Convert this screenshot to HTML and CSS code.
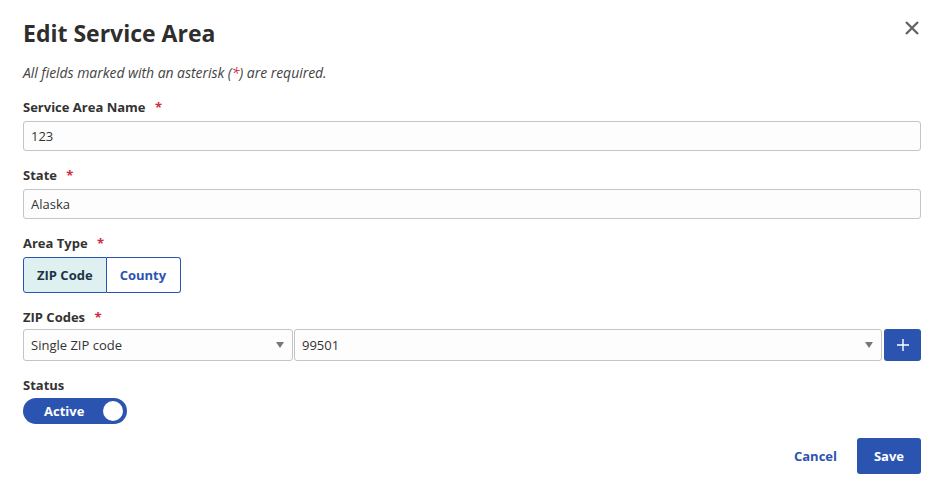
FILE: index.html
```html
<!DOCTYPE html>
<html lang="en">
<head>
    <meta charset="UTF-8">
    <title>Edit Service Area</title>
    <link rel="stylesheet" href="styles.css">
</head>
<body>
    <div class="modal">
        <div class="modal-header">
            <h1>Edit Service Area</h1>
            <button class="close-btn" aria-label="Close">
                <svg width="16" height="16" viewBox="0 0 16 16">
                    <path d="M2 2 L14 14 M14 2 L2 14" stroke="#666" stroke-width="2.4" stroke-linecap="butt"/>
                </svg>
            </button>
        </div>

        <p class="note">All fields marked with an asterisk (<span class="req">*</span>) are required.</p>

        <!-- Service area name -->
        <div class="field">
            <label>Service Area Name <span class="req">*</span></label>
            <input type="text" class="text-input" value="123">
        </div>

        <!-- State -->
        <div class="field">
            <label>State <span class="req">*</span></label>
            <input type="text" class="text-input" value="Alaska">
        </div>

        <!-- Area type -->
        <div class="field">
            <label>Area Type <span class="req">*</span></label>
            <div class="segmented">
                <button class="seg-btn selected">ZIP Code</button>
                <button class="seg-btn">County</button>
            </div>
        </div>

        <!-- ZIP codes -->
        <div class="field zip-field">
            <label>ZIP Codes <span class="req">*</span></label>
            <div class="zip-row">
                <div class="select select-mode">
                    <span>Single ZIP code</span>
                    <span class="caret"></span>
                </div>
                <div class="select select-zip">
                    <span>99501</span>
                    <span class="caret"></span>
                </div>
                <button class="add-btn" aria-label="Add">
                    <svg width="12" height="12" viewBox="0 0 12 12">
                        <path d="M6 0 V12 M0 6 H12" stroke="#fff" stroke-width="1.4"/>
                    </svg>
                </button>
            </div>
        </div>

        <!-- Status -->
        <div class="field status-field">
            <label>Status</label>
            <div class="toggle">
                <span class="toggle-text">Active</span>
                <span class="toggle-knob"></span>
            </div>
        </div>

        <div class="modal-footer">
            <button class="cancel-btn">Cancel</button>
            <button class="save-btn">Save</button>
        </div>
    </div>
</body>
</html>
```

FILE: styles.css
```css
/* Edit service area modal */
body {
    margin: 0;
    padding: 0;
    background-color: #fff;
    font-family: "Open Sans", "Noto Sans", sans-serif;
    color: #333;
}
.modal {
    width: 898px;
    padding: 17px 24px 0 23px;
}
.modal-header {
    display: flex;
    justify-content: space-between;
    align-items: center;
    height: 32px;
}
h1 {
    margin: 0;
    font-size: 23px;
    line-height: 32px;
    font-weight: 700;
    color: #2e2e2e;
}
.close-btn {
    background: none;
    border: none;
    padding: 0;
    margin-right: -2px;
    margin-top: -10px;
    width: 22px;
    height: 22px;
    display: flex;
    align-items: center;
    justify-content: center;
    cursor: pointer;
}
.note {
    margin: 15px 0 0 0;
    font-size: 14px;
    line-height: 18px;
    font-style: italic;
    letter-spacing: -0.05px;
    color: #444;
}
.req {
    color: #d12a3a;
}
.field {
    margin-top: 16px;
}
.field + .field {
    margin-top: 15px;
}
.field label {
    display: block;
    font-size: 13px;
    line-height: 18px;
    font-weight: 700;
    color: #333;
    margin-bottom: 5px;
}
.field label .req {
    margin-left: 6px;
}
.text-input {
    display: block;
    box-sizing: border-box;
    width: 100%;
    height: 30px;
    padding: 0 7px;
    border: 1px solid #c4c4c4;
    border-radius: 3px;
    background-color: #fdfdfd;
    font-family: inherit;
    font-size: 13px;
    color: #333;
}
.segmented {
    display: flex;
}
.seg-btn {
    height: 36px;
    padding: 0 13px;
    border: 1px solid #2b54b1;
    background-color: #fff;
    color: #2b54b1;
    font-family: inherit;
    font-size: 13px;
    font-weight: 700;
    cursor: pointer;
}
.seg-btn:first-child {
    border-radius: 3px 0 0 3px;
}
.seg-btn:last-child {
    border-left: none;
    border-radius: 0 3px 3px 0;
    padding: 0 14px 0 13px;
}
.seg-btn.selected {
    background-color: #def0f0;
    color: #1d3448;
}
.zip-field {
    margin-top: 16px;
}
.zip-field label {
    margin-bottom: 3px;
}
.zip-row {
    display: flex;
    gap: 1px;
}
.select {
    box-sizing: border-box;
    height: 32px;
    display: flex;
    align-items: center;
    justify-content: space-between;
    padding: 0 8px 0 7px;
    border: 1px solid #c4c4c4;
    border-radius: 3px;
    background-color: #fdfdfd;
    font-size: 13px;
    color: #333;
}
.select-mode {
    width: 270px;
}
.select-zip {
    flex: 1;
}
.caret {
    width: 0;
    height: 0;
    border-left: 4px solid transparent;
    border-right: 4px solid transparent;
    border-top: 6px solid #777;
}
.add-btn {
    width: 37px;
    height: 32px;
    margin-left: 1px;
    border: none;
    border-radius: 3px;
    background-color: #2b54b1;
    display: flex;
    align-items: center;
    justify-content: center;
    cursor: pointer;
}
.status-field {
    margin-top: 16px;
}
.status-field label {
    margin-bottom: 4px;
}
.toggle {
    box-sizing: border-box;
    width: 104px;
    height: 26px;
    border-radius: 13px;
    background-color: #2b54b1;
    display: flex;
    align-items: center;
    justify-content: space-between;
    padding: 0 4px 0 21px;
}
.toggle-text {
    color: #fff;
    font-size: 13px;
    font-weight: 700;
}
.toggle-knob {
    width: 20px;
    height: 20px;
    border-radius: 50%;
    background-color: #fff;
}
.modal-footer {
    display: flex;
    justify-content: flex-end;
    align-items: center;
    gap: 20px;
    margin-top: 14px;
}
.cancel-btn {
    background: none;
    border: none;
    padding: 0;
    color: #2b54b1;
    font-family: inherit;
    font-size: 13px;
    font-weight: 700;
    cursor: pointer;
}
.save-btn {
    width: 64px;
    height: 36px;
    border: none;
    border-radius: 3px;
    background-color: #2b54b1;
    color: #fff;
    font-family: inherit;
    font-size: 13px;
    font-weight: 700;
    cursor: pointer;
}
```
